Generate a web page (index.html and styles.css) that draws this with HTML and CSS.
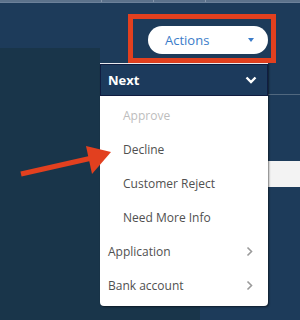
FILE: index.html
```html
<!DOCTYPE html>
<html lang="en">
<head>
  <meta charset="UTF-8" />
  <meta name="viewport" content="width=device-width, initial-scale=1.0" />
  <title>Actions menu</title>
  <link rel="stylesheet" href="styles.css">
</head>
<body>
  <div class="page">
    <div class="tabs">
      <span class="tabs__item"></span>
      <span class="tabs__item"></span>
      <span class="tabs__item"></span>
      <span class="tabs__item tabs__item--last"></span>
    </div>

    <header class="toolbar">
      <div class="actions">
        <button class="actions__btn" type="button">
          <span>Actions</span>
          <span class="actions__caret"></span>
        </button>

        <div class="menu">
          <div class="menu__head">
            <span>Next</span>
            <svg class="menu__chev" width="12" height="8" viewBox="0 0 12 8">
              <path d="M1.5 1.5 L6 6 L10.5 1.5" fill="none" stroke="#fff" stroke-width="2.4" />
            </svg>
          </div>
          <ul class="menu__list">
            <li class="menu__item menu__item--sub menu__item--disabled">Approve</li>
            <li class="menu__item menu__item--sub">Decline</li>
            <li class="menu__item menu__item--sub">Customer Reject</li>
            <li class="menu__item menu__item--sub">Need More Info</li>
            <li class="menu__item">
              <span>Application</span>
              <svg width="7" height="11" viewBox="0 0 7 11"><path d="M1.5 1.5 L5.5 5.5 L1.5 9.5" fill="none" stroke="#9a9a9a" stroke-width="1.6" /></svg>
            </li>
            <li class="menu__item">
              <span>Bank account</span>
              <svg width="7" height="11" viewBox="0 0 7 11"><path d="M1.5 1.5 L5.5 5.5 L1.5 9.5" fill="none" stroke="#9a9a9a" stroke-width="1.6" /></svg>
            </li>
          </ul>
        </div>
      </div>
    </header>

    <div class="content">
      <aside class="sidebar"></aside>
      <section class="main">
        <div class="main__rule"></div>
        <div class="main__strip"></div>
        <div class="main__block"></div>
      </section>
    </div>

    <!-- annotation overlay -->
    <div class="highlight"></div>
    <svg class="arrow" width="120" height="40" viewBox="0 0 120 40">
      <line x1="21" y1="28" x2="92" y2="12" stroke="#e2401f" stroke-width="5" />
      <polygon points="86,0 111,6 92,28" fill="#e2401f" />
    </svg>
  </div>
</body>
</html>
```

FILE: styles.css
```css
body {
  margin: 0;
  font-family: 'Open Sans', 'Noto Sans', sans-serif;
  background-color: #1d3b5a;
}

.page {
  position: relative;
  width: 300px;
  height: 320px;
  overflow: hidden;
  display: flex;
  flex-direction: column;
}

.tabs {
  display: flex;
  height: 2px;
  background-color: #5c728b;
  border-bottom: 1px solid #6c819a;
}

.tabs__item {
  width: 51px;
  border-right: 1px solid #8596aa;
}

.tabs__item:first-child {
  width: 101px;
}

.tabs__item--last {
  flex: 1;
  border-right: none;
}

.toolbar {
  height: 45px;
  display: flex;
  justify-content: flex-end;
  padding-right: 32px;
}

.actions {
  position: relative;
  padding-top: 23px;
}

.actions__btn {
  width: 120px;
  height: 28px;
  display: flex;
  align-items: center;
  justify-content: space-between;
  padding: 0 14px 0 17px;
  border: none;
  border-radius: 14px;
  background-color: #fff;
  color: #3b7cc9;
  font-family: inherit;
  font-size: 13px;
  box-sizing: border-box;
}

.actions__caret {
  width: 0;
  height: 0;
  border-left: 3.5px solid transparent;
  border-right: 3.5px solid transparent;
  border-top: 4px solid #3b7cc9;
}

.menu {
  position: absolute;
  top: 60px;
  right: 0;
  width: 168px;
  z-index: 2;
  background-color: #fff;
  border-radius: 0 0 4px 4px;
  box-shadow: 1px 1px 2px rgba(0, 0, 0, 0.5);
  border-top: 1px solid #e8eaef;
}

.menu__head {
  height: 30px;
  display: flex;
  align-items: center;
  justify-content: space-between;
  padding: 0 10px 0 7px;
  background-color: #1c3a5c;
  border: 1px solid #0f1c40;
  color: #fff;
  font-size: 13px;
  font-weight: 700;
}

.menu__list {
  list-style: none;
  margin: 0;
  padding: 2px 0 4px;
}

.menu__item {
  height: 34px;
  display: flex;
  align-items: center;
  justify-content: space-between;
  padding: 0 15px 0 8px;
  color: #505050;
  font-size: 12px;
}

.menu__item--sub {
  padding-left: 23px;
}

.menu__item--disabled {
  color: #bdbdbd;
}

.content {
  flex: 1;
  display: flex;
}

.sidebar {
  width: 100px;
  background-color: #19354a;
}

.main {
  flex: 1;
  display: flex;
  flex-direction: column;
}

.main__rule {
  height: 1px;
  margin-top: 46px;
  background-color: #51687f;
}

.main__strip {
  height: 26px;
  margin-top: 66px;
  background-color: #f3f3f3;
}

.main__block {
  width: 100px;
  flex: 1;
  margin-top: 116px;
  background-color: #19354a;
}

.highlight {
  position: absolute;
  left: 128px;
  top: 14px;
  width: 138px;
  height: 39px;
  border: 5px solid #e2401f;
}

.arrow {
  position: absolute;
  left: 0;
  top: 146px;
  z-index: 3;
}
```
